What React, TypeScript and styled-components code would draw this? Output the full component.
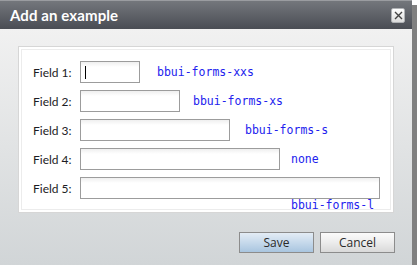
import React from 'react'
import styled, { createGlobalStyle } from 'styled-components'

const GlobalStyle = createGlobalStyle`
  html, body {
    margin: 0;
    padding: 0;
    background: #ffffff;
  }
`

const fields = [
  { label: 'Field 1:', width: 60, hint: 'bbui-forms-xxs', gap: 17, caret: true },
  { label: 'Field 2:', width: 100, hint: 'bbui-forms-xs', gap: 13 },
  { label: 'Field 3:', width: 150, hint: 'bbui-forms-s', gap: 15 },
  { label: 'Field 4:', width: 200, hint: 'none', gap: 11 },
  { label: 'Field 5:', width: 300, hint: 'bbui-forms-l', below: true },
]

const Dialog = styled.div`
  width: 412px;
  height: 265px;
  display: flex;
  flex-direction: column;
  box-sizing: border-box;
  box-shadow: 5px 5px 0 #808080;
  font-family: Lato, 'Open Sans', sans-serif;
`

const TitleBar = styled.div`
  height: 29px;
  flex: none;
  display: flex;
  align-items: center;
  justify-content: space-between;
  padding: 0 7px 0 10px;
  background: linear-gradient(#74777c, #4a4d54);
  border-top: 1px solid #9a9ca0;
  box-sizing: border-box;
`

const Title = styled.span`
  color: #ffffff;
  font-weight: 700;
  font-size: 15px;
  letter-spacing: 0.1px;
`

const CloseButton = styled.div`
  width: 14px;
  height: 15px;
  box-sizing: border-box;
  border: 1px solid #b0b2b5;
  border-radius: 2px;
  background: linear-gradient(#ffffff, #dcdcdc);
  display: flex;
  align-items: center;
  justify-content: center;
`

const Body = styled.div`
  flex: 1;
  display: flex;
  flex-direction: column;
  padding: 17px 17px 12px 18px;
  background: linear-gradient(#f1f1f1, #d1d5d7);
`

const Panel = styled.div`
  width: 376px;
  height: 167px;
  box-sizing: border-box;
  background: #ffffff;
  border: 1px solid #d6d6d6;
  box-shadow: inset 0 0 0 2px #ffffff, inset 0 0 0 3px #ececec;
  padding: 14px 0 0 14px;
  display: flex;
  flex-direction: column;
  gap: 7px;
`

const Row = styled.div`
  display: flex;
  align-items: center;
  height: 22px;
`

const Label = styled.span`
  width: 47px;
  flex: none;
  font-size: 12px;
  color: #1c1c24;
`

const InputBox = styled.div<{ $width: number }>`
  width: ${p => p.$width}px;
  height: 22px;
  box-sizing: border-box;
  border: 1px solid #9c9c9c;
  background: linear-gradient(#efefef, #ffffff 5px);
  display: flex;
  align-items: center;
  padding-left: 4px;
`

const Caret = styled.span`
  width: 1px;
  height: 13px;
  background: #000000;
`

const Hint = styled.span<{ $gap?: number }>`
  margin-left: ${p => p.$gap ?? 14}px;
  font-family: 'DejaVu Sans Mono', 'Liberation Mono', monospace;
  font-size: 11.5px;
  color: #2222ee;
`

const HintBelow = styled(Hint)`
  margin-left: 258px;
  margin-top: -8px;
  line-height: 14px;
`

const Footer = styled.div`
  margin-top: auto;
  display: flex;
  justify-content: flex-end;
  gap: 6px;
`

const Button = styled.button<{ $primary?: boolean }>`
  width: 75px;
  height: 21px;
  box-sizing: border-box;
  border: 1px solid #8c8c8c;
  border-radius: 0;
  padding: 0;
  font-family: 'Open Sans', Lato, sans-serif;
  font-size: 12px;
  color: #2a2a2a;
  background: ${p =>
    p.$primary
      ? 'linear-gradient(#e3ecf5, #c6d9eb 50%, #a9c5df)'
      : 'linear-gradient(#fbfbfb, #ececec 50%, #d9d9d9)'};
`

export default function App() {
  return (
    <>
      <GlobalStyle />
      <Dialog>
        <TitleBar>
          <Title>Add an example</Title>
          <CloseButton>
            <svg width="9" height="9" viewBox="0 0 9 9">
              <path d="M1 1 L8 8 M8 1 L1 8" stroke="#444" strokeWidth="1.4" />
            </svg>
          </CloseButton>
        </TitleBar>
        <Body>
          <Panel>
            {fields.map(f => (
              <React.Fragment key={f.label}>
                <Row>
                  <Label>{f.label}</Label>
                  <InputBox $width={f.width}>{f.caret && <Caret />}</InputBox>
                  {!f.below && <Hint $gap={f.gap}>{f.hint}</Hint>}
                </Row>
                {f.below && <HintBelow>{f.hint}</HintBelow>}
              </React.Fragment>
            ))}
          </Panel>
          <Footer>
            <Button $primary>Save</Button>
            <Button>Cancel</Button>
          </Footer>
        </Body>
      </Dialog>
    </>
  )
}
